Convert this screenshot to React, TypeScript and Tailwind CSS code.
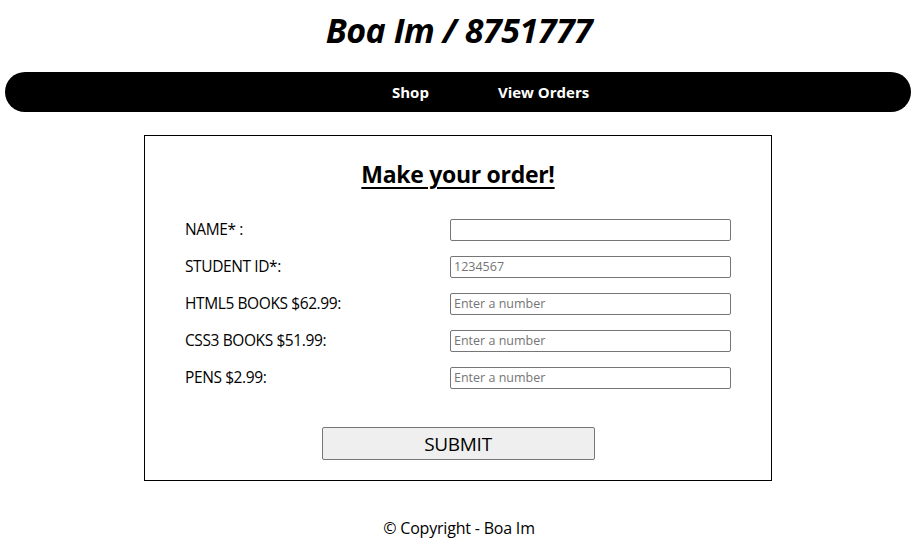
import React from "react";

const rows = [
  { label: "NAME* :", placeholder: "" },
  { label: "STUDENT ID*:", placeholder: "1234567" },
  { label: "HTML5 BOOKS $62.99:", placeholder: "Enter a number" },
  { label: "CSS3 BOOKS $51.99:", placeholder: "Enter a number" },
  { label: "PENS $2.99:", placeholder: "Enter a number" },
];

export default function App() {
  return (
    <div className="min-h-[551px] bg-white text-black font-['Open_Sans',sans-serif]">
      {/* Header */}
      <h1 className="h-[60px] flex items-center justify-center text-[34px] font-bold italic tracking-[-0.5px]">
        Boa Im / 8751777
      </h1>

      {/* Nav */}
      <nav className="mt-[12px] ml-[5px] mr-[7px] h-[40px] rounded-[20px] bg-black flex items-center pl-[387px] gap-[69px] text-[15px] font-bold text-white">
        <a href="#">Shop</a>
        <a href="#">View Orders</a>
      </nav>

      {/* Order form */}
      <form className="ml-[144px] mt-[23px] w-[628px] h-[346px] border border-black pt-[22px] px-[40px]">
        <h2 className="text-center text-[23px] font-bold underline underline-offset-[4px] decoration-2 leading-[32px] tracking-[-0.3px]">
          Make your order!
        </h2>

        <div className="mt-[28px] flex flex-col gap-[15px]">
          {rows.map((r) => (
            <div key={r.label} className="grid grid-cols-[265px_281px] items-center h-[22px]">
              <label className="text-[15.5px] tracking-[-0.4px]">{r.label}</label>
              <input
                type="text"
                placeholder={r.placeholder}
                className="h-[22px] w-[281px] rounded-[2px] border border-[#767676] px-[3px] text-[12.5px] placeholder:text-[#757575]"
              />
            </div>
          ))}
        </div>

        <div className="mt-[39px] flex justify-center">
          <button
            type="button"
            className="h-[33px] w-[273px] rounded-[2px] border border-[#767676] bg-[#efefef] pt-[2px] text-[19px] tracking-[-0.3px]"
          >
            SUBMIT
          </button>
        </div>
      </form>

      {/* Footer */}
      <footer className="mt-[35px] text-center text-[16px] tracking-[-0.2px]">
        © Copyright - Boa Im
      </footer>
    </div>
  );
}
